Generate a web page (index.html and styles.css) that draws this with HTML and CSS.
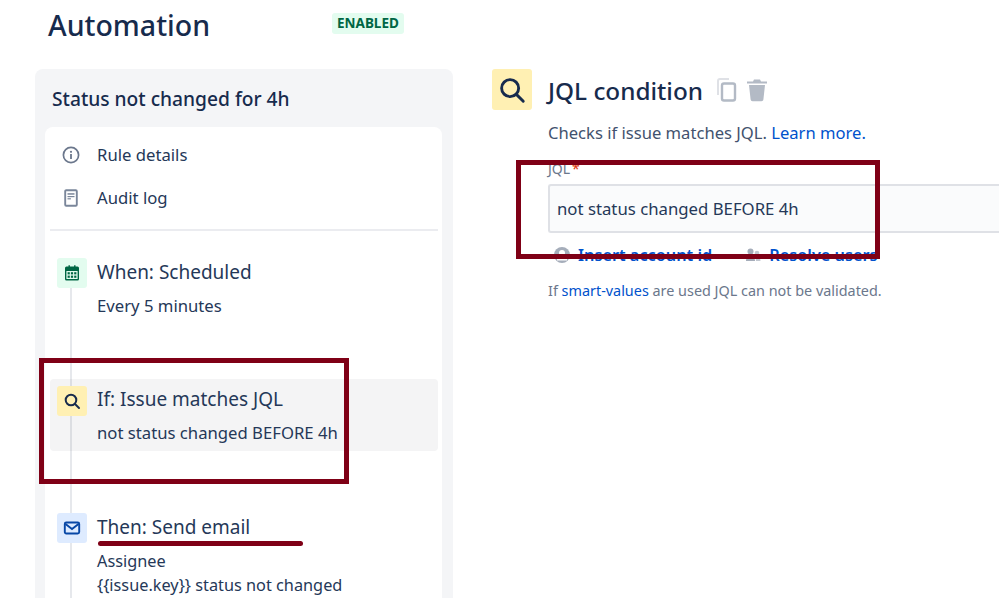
FILE: index.html
```html
<!DOCTYPE html>
<html>
<head>
  <title>Automation</title>
  <link rel="stylesheet" href="styles.css">
</head>
<body>
  <div class="page-header">
    <h1>Automation</h1>
    <span class="badge">ENABLED</span>
  </div>

  <div class="content">
    <div class="rule-panel">
      <h2>Status not changed for 4h</h2>
      <div class="rule-card">
        <div class="nav-row">
          <svg class="nav-icon" viewBox="0 0 18 18"><circle cx="9" cy="9" r="7.6" fill="none" stroke="#6b778c" stroke-width="1.7"/><rect x="8.1" y="8" width="1.8" height="5" fill="#6b778c"/><circle cx="9" cy="5.8" r="1.1" fill="#6b778c"/></svg>
          <span>Rule details</span>
        </div>
        <div class="nav-row">
          <svg class="nav-icon" viewBox="0 0 18 18"><rect x="3.2" y="1.2" width="11.6" height="15.600" rx="1" fill="none" stroke="#7a869a" stroke-width="1.9"/><rect x="5.500" y="4.200" width="7" height="1.500" fill="#7a869a"/><rect x="5.500" y="7" width="7" height="1.200" fill="#7a869a"/><rect x="5.500" y="9.200" width="3.400" height="1.200" fill="#7a869a"/></svg>
          <span>Audit log</span>
        </div>
        <div class="divider"></div>

        <div class="timeline">
          <div class="step step-when">
            <div class="step-icon icon-green">
              <svg viewBox="0 0 18 18" width="18" height="18"><path d="M3.500 2.500h2V1.200h1.400v1.300h4.200V1.200h1.400v1.300h2A1.500 1.500 0 0 1 16 4v11a1.500 1.500 0 0 1-1.500 1.500h-11A1.500 1.500 0 0 1 2 15V4a1.500 1.500 0 0 1 1.500-1.500z" fill="#006644"/><rect x="3.400" y="7" width="11.200" height="8" fill="#e3fcef"/><g fill="#006644"><rect x="4.600" y="8.200" width="2.200" height="2.200"/><rect x="7.900" y="8.200" width="2.200" height="2.200"/><rect x="11.200" y="8.200" width="2.200" height="2.200"/><rect x="4.600" y="11.600" width="2.200" height="2.200"/><rect x="7.900" y="11.600" width="2.200" height="2.200"/><rect x="11.200" y="11.600" width="2.200" height="2.200"/></g></svg>
            </div>
            <div class="step-text">
              <div class="step-title">When: Scheduled</div>
              <div class="step-sub">Every 5 minutes</div>
            </div>
          </div>

          <div class="step step-if">
            <div class="step-icon icon-yellow">
              <svg viewBox="0 0 18 18" width="18" height="18"><circle cx="8" cy="8" r="5.300" fill="none" stroke="#172b4d" stroke-width="2"/><path d="M12 12l4 4" stroke="#172b4d" stroke-width="2" stroke-linecap="round"/></svg>
            </div>
            <div class="step-text">
              <div class="step-title">If: Issue matches JQL</div>
              <div class="step-sub">not status changed BEFORE 4h</div>
            </div>
          </div>

          <div class="step">
            <div class="step-icon icon-blue">
              <svg viewBox="0 0 18 18" width="18" height="18"><rect x="1.800" y="3.500" width="14.400" height="11" rx="1.500" fill="none" stroke="#0747a6" stroke-width="1.900"/><path d="M2.500 5l6.500 5 6.500-5" fill="none" stroke="#0747a6" stroke-width="1.900"/></svg>
            </div>
            <div class="step-text">
              <div class="step-title">Then: Send email</div>
              <div class="step-sub step-sub-tight">Assignee<br>{{issue.key}} status not changed</div>
            </div>
          </div>
        </div>
      </div>
    </div>

    <div class="detail">
      <div class="detail-icon">
        <svg viewBox="0 0 24 24" width="30" height="30"><circle cx="10.500" cy="10.500" r="6.800" fill="none" stroke="#172b4d" stroke-width="2.300"/><path d="M15.500 15.500l5.500 5.500" stroke="#172b4d" stroke-width="2.300" stroke-linecap="round"/></svg>
      </div>
      <div class="detail-body">
        <div class="detail-head">
          <h3>JQL condition</h3>
          <svg class="copy-icon" viewBox="0 0 21 24" width="21" height="24"><path d="M2 17V3a2 2 0 0 1 2-2h9" fill="none" stroke="#dfe1e6" stroke-width="2"/><rect x="6" y="5.500" width="13" height="17" rx="2" fill="none" stroke="#b3bac5" stroke-width="2.400"/></svg>
          <svg class="trash-icon" viewBox="0 0 22 24" width="22" height="24"><path d="M8 1.500h6l1 2h6v2H1v-2h6z" fill="#b3bac5"/><path d="M3 7h16l-1.600 14.500a2 2 0 0 1-2 1.800H6.600a2 2 0 0 1-2-1.800z" fill="#b3bac5"/></svg>
        </div>
        <p class="detail-desc">Checks if issue matches JQL. <a href="#">Learn more.</a></p>
        <div class="jql-label">JQL<span class="req">*</span></div>
        <div class="jql-input">not status changed BEFORE 4h</div>
        <div class="jql-actions">
          <a href="#" class="action">
            <svg viewBox="0 0 16 16" width="16" height="16"><circle cx="8" cy="8" r="8" fill="#a5adba"/><circle cx="8" cy="6" r="3" fill="#fff"/><path d="M2.800 13.500a5.200 5.200 0 0 1 10.400 0z" fill="#fff"/></svg>
            Insert account id
          </a>
          <a href="#" class="action">
            <svg viewBox="0 0 16 16" width="16" height="16"><circle cx="5.500" cy="4.500" r="3" fill="#a5adba"/><circle cx="12" cy="6" r="2.300" fill="#c1c7d0"/><path d="M1 14c0-7 9-7 9 0z" fill="#a5adba"/><path d="M11 14c0-2-.5-3.500-1.500-4.500 3-1.500 6 .5 6 4.500z" fill="#c1c7d0"/></svg>
            Resolve users
          </a>
        </div>
        <p class="jql-help">If <a href="#">smart-values</a> are used JQL can not be validated.</p>
      </div>
    </div>
  </div>

  <!-- red marks drawn on top of the screenshot -->
  <div class="mark mark-if"></div>
  <div class="mark mark-jql"></div>
  <div class="mark-line"></div>
</body>
</html>
```

FILE: styles.css
```css
html, body {
  height: 100%;
}

body {
  font-family: "Noto Sans", "Open Sans", sans-serif;
  margin: 0;
  padding: 0;
  position: relative;
  overflow: hidden;
  background-color: #fff;
  color: #172b4d;
}

.page-header {
  display: flex;
  align-items: flex-start;
  height: 69px;
  padding-left: 48px;
}

h1 {
  width: 284px;
  margin: 0;
  padding-top: 5px;
  font-size: 28.5px;
  line-height: 40px;
  font-weight: 500;
}

.badge {
  margin-top: 13px;
  padding: 0 5px;
  height: 21px;
  line-height: 21px;
  font-size: 13.5px;
  font-weight: 700;
  color: #006644;
  background-color: #e3fcef;
  border-radius: 3px;
}

.content {
  display: flex;
  align-items: flex-start;
  height: 529px;
  overflow: hidden;
}

.rule-panel {
  width: 418px;
  height: 529px;
  margin-left: 35px;
  padding: 0 11px 0 10px;
  box-sizing: border-box;
  background-color: #f4f5f7;
  border-radius: 8px 8px 0 0;
  overflow: hidden;
}

.rule-panel h2 {
  margin: 0;
  height: 58px;
  padding-left: 7px;
  font-size: 19.2px;
  line-height: 60px;
  font-weight: 500;
}

.rule-card {
  height: 471px;
  padding: 6px 4px 0 5px;
  box-sizing: border-box;
  background-color: #fff;
  border-radius: 8px 8px 0 0;
  color: #253858;
  overflow: hidden;
}

.nav-row {
  display: flex;
  align-items: center;
  gap: 17px;
  height: 43px;
  padding-left: 12px;
  font-size: 16.7px;
}

.nav-icon {
  width: 18px;
  height: 18px;
}

.divider {
  height: 2px;
  margin-top: 10px;
  background-color: #ebecf0;
}

.timeline {
  position: relative;
  margin-top: 20px;
}

.timeline::before {
  content: "";
  position: absolute;
  left: 20px;
  top: 30px;
  bottom: 0;
  width: 2px;
  background-color: #e6e8ec;
}

.step {
  position: relative;
  display: flex;
  gap: 10px;
  padding: 7px;
  border-radius: 4px;
}

.step-when {
  height: 128px;
  box-sizing: border-box;
}

.step-if {
  height: 72px;
  margin-bottom: 55px;
  box-sizing: border-box;
  background-color: rgba(30, 30, 45, 0.048);
}

.step-if .step-text {
  margin-top: -1px;
}

.step-icon {
  display: flex;
  align-items: center;
  justify-content: center;
  flex: none;
  width: 30px;
  height: 30px;
  border-radius: 3px;
}

.icon-green {
  background-color: #e3fcef;
}

.icon-yellow {
  background-color: #fff0b3;
}

.icon-blue {
  background-color: #deebff;
}

.step-title {
  font-size: 19px;
  line-height: 28px;
}

.step-sub {
  margin-top: 8px;
  font-size: 16.7px;
  line-height: 24px;
}

.step-sub-tight {
  font-size: 16.3px;
}

.detail {
  display: flex;
  margin-left: 39px;
  flex: 1;
  min-width: 0;
}

.detail-icon {
  display: flex;
  align-items: center;
  justify-content: center;
  flex: none;
  width: 40px;
  height: 41px;
  background-color: #fff0b3;
  border-radius: 3px;
}

.detail-body {
  flex: 1;
  margin-left: 16px;
}

.detail-head {
  display: flex;
  align-items: center;
  height: 42px;
}

.detail-head h3 {
  margin: 0 13px 0 0;
  font-size: 24.3px;
  font-weight: 500;
}

.trash-icon {
  margin-left: 9px;
}

.detail-desc {
  margin: 10px 0 0;
  font-size: 16.6px;
  line-height: 24px;
  color: #42526e;
}

a {
  color: #0052cc;
  text-decoration: none;
}

.jql-label {
  margin-top: 14px;
  font-size: 14px;
  line-height: 20px;
  color: #6b778c;
}

.req {
  color: #de350b;
  margin-left: 2px;
}

.jql-input {
  margin-top: 5px;
  height: 49px;
  padding-left: 7px;
  box-sizing: border-box;
  line-height: 45px;
  font-size: 16.75px;
  color: #253858;
  background-color: #fafbfc;
  border: 2px solid #dfe1e6;
  border-right: 0;
  border-radius: 3px 0 0 3px;
}

.jql-actions {
  display: flex;
  gap: 33px;
  margin-top: 10px;
  padding-left: 6px;
}

.action {
  display: flex;
  align-items: center;
  gap: 8px;
  font-size: 16.3px;
  line-height: 24px;
  font-weight: 600;
}

.jql-help {
  margin: 14px 0 0;
  font-size: 14.4px;
  line-height: 20px;
  color: #6b778c;
}

.mark {
  position: absolute;
  box-sizing: border-box;
  border: 5px solid #7f0016;
}

.mark-if {
  left: 39px;
  top: 358px;
  width: 310px;
  height: 126px;
}

.mark-jql {
  left: 516px;
  top: 160px;
  width: 364px;
  height: 99px;
}

.mark-line {
  position: absolute;
  left: 98px;
  top: 541px;
  width: 205px;
  height: 5px;
  border-radius: 3px;
  background-color: #7f0016;
}
```
